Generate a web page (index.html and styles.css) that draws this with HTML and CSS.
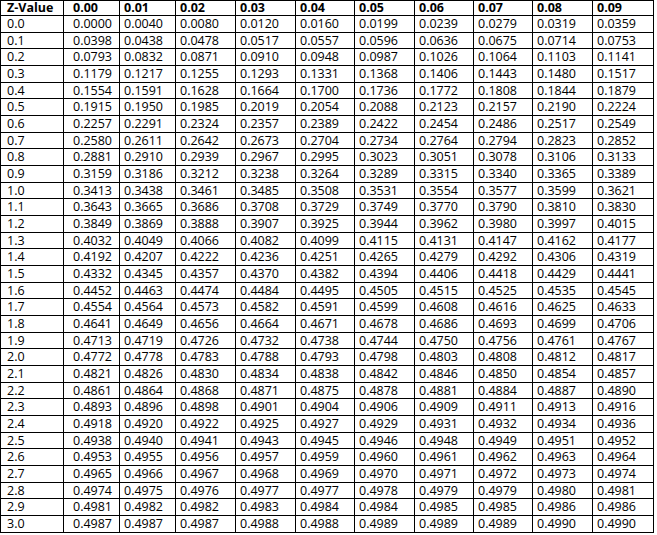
FILE: index.html
```html
<!DOCTYPE html>
<html>
<head>
<meta charset="utf-8">
<link rel="stylesheet" href="styles.css">
</head>
<body>
<table class="ztable">
<colgroup>
<col class="c0"><col class="c1"><col class="c2"><col class="c3"><col class="c4"><col class="c5"><col class="c6"><col class="c7"><col class="c8"><col class="c9"><col class="c10">
</colgroup>
<thead>
<tr><th>Z-Value</th><th>0.00</th><th>0.01</th><th>0.02</th><th>0.03</th><th>0.04</th><th>0.05</th><th>0.06</th><th>0.07</th><th>0.08</th><th>0.09</th></tr>
</thead>
<tbody>
<tr><td>0.0</td><td>0.0000</td><td>0.0040</td><td>0.0080</td><td>0.0120</td><td>0.0160</td><td>0.0199</td><td>0.0239</td><td>0.0279</td><td>0.0319</td><td>0.0359</td></tr>
<tr><td>0.1</td><td>0.0398</td><td>0.0438</td><td>0.0478</td><td>0.0517</td><td>0.0557</td><td>0.0596</td><td>0.0636</td><td>0.0675</td><td>0.0714</td><td>0.0753</td></tr>
<tr><td>0.2</td><td>0.0793</td><td>0.0832</td><td>0.0871</td><td>0.0910</td><td>0.0948</td><td>0.0987</td><td>0.1026</td><td>0.1064</td><td>0.1103</td><td>0.1141</td></tr>
<tr><td>0.3</td><td>0.1179</td><td>0.1217</td><td>0.1255</td><td>0.1293</td><td>0.1331</td><td>0.1368</td><td>0.1406</td><td>0.1443</td><td>0.1480</td><td>0.1517</td></tr>
<tr><td>0.4</td><td>0.1554</td><td>0.1591</td><td>0.1628</td><td>0.1664</td><td>0.1700</td><td>0.1736</td><td>0.1772</td><td>0.1808</td><td>0.1844</td><td>0.1879</td></tr>
<tr><td>0.5</td><td>0.1915</td><td>0.1950</td><td>0.1985</td><td>0.2019</td><td>0.2054</td><td>0.2088</td><td>0.2123</td><td>0.2157</td><td>0.2190</td><td>0.2224</td></tr>
<tr><td>0.6</td><td>0.2257</td><td>0.2291</td><td>0.2324</td><td>0.2357</td><td>0.2389</td><td>0.2422</td><td>0.2454</td><td>0.2486</td><td>0.2517</td><td>0.2549</td></tr>
<tr><td>0.7</td><td>0.2580</td><td>0.2611</td><td>0.2642</td><td>0.2673</td><td>0.2704</td><td>0.2734</td><td>0.2764</td><td>0.2794</td><td>0.2823</td><td>0.2852</td></tr>
<tr><td>0.8</td><td>0.2881</td><td>0.2910</td><td>0.2939</td><td>0.2967</td><td>0.2995</td><td>0.3023</td><td>0.3051</td><td>0.3078</td><td>0.3106</td><td>0.3133</td></tr>
<tr><td>0.9</td><td>0.3159</td><td>0.3186</td><td>0.3212</td><td>0.3238</td><td>0.3264</td><td>0.3289</td><td>0.3315</td><td>0.3340</td><td>0.3365</td><td>0.3389</td></tr>
<tr><td>1.0</td><td>0.3413</td><td>0.3438</td><td>0.3461</td><td>0.3485</td><td>0.3508</td><td>0.3531</td><td>0.3554</td><td>0.3577</td><td>0.3599</td><td>0.3621</td></tr>
<tr><td>1.1</td><td>0.3643</td><td>0.3665</td><td>0.3686</td><td>0.3708</td><td>0.3729</td><td>0.3749</td><td>0.3770</td><td>0.3790</td><td>0.3810</td><td>0.3830</td></tr>
<tr><td>1.2</td><td>0.3849</td><td>0.3869</td><td>0.3888</td><td>0.3907</td><td>0.3925</td><td>0.3944</td><td>0.3962</td><td>0.3980</td><td>0.3997</td><td>0.4015</td></tr>
<tr><td>1.3</td><td>0.4032</td><td>0.4049</td><td>0.4066</td><td>0.4082</td><td>0.4099</td><td>0.4115</td><td>0.4131</td><td>0.4147</td><td>0.4162</td><td>0.4177</td></tr>
<tr><td>1.4</td><td>0.4192</td><td>0.4207</td><td>0.4222</td><td>0.4236</td><td>0.4251</td><td>0.4265</td><td>0.4279</td><td>0.4292</td><td>0.4306</td><td>0.4319</td></tr>
<tr><td>1.5</td><td>0.4332</td><td>0.4345</td><td>0.4357</td><td>0.4370</td><td>0.4382</td><td>0.4394</td><td>0.4406</td><td>0.4418</td><td>0.4429</td><td>0.4441</td></tr>
<tr><td>1.6</td><td>0.4452</td><td>0.4463</td><td>0.4474</td><td>0.4484</td><td>0.4495</td><td>0.4505</td><td>0.4515</td><td>0.4525</td><td>0.4535</td><td>0.4545</td></tr>
<tr><td>1.7</td><td>0.4554</td><td>0.4564</td><td>0.4573</td><td>0.4582</td><td>0.4591</td><td>0.4599</td><td>0.4608</td><td>0.4616</td><td>0.4625</td><td>0.4633</td></tr>
<tr><td>1.8</td><td>0.4641</td><td>0.4649</td><td>0.4656</td><td>0.4664</td><td>0.4671</td><td>0.4678</td><td>0.4686</td><td>0.4693</td><td>0.4699</td><td>0.4706</td></tr>
<tr><td>1.9</td><td>0.4713</td><td>0.4719</td><td>0.4726</td><td>0.4732</td><td>0.4738</td><td>0.4744</td><td>0.4750</td><td>0.4756</td><td>0.4761</td><td>0.4767</td></tr>
<tr><td>2.0</td><td>0.4772</td><td>0.4778</td><td>0.4783</td><td>0.4788</td><td>0.4793</td><td>0.4798</td><td>0.4803</td><td>0.4808</td><td>0.4812</td><td>0.4817</td></tr>
<tr><td>2.1</td><td>0.4821</td><td>0.4826</td><td>0.4830</td><td>0.4834</td><td>0.4838</td><td>0.4842</td><td>0.4846</td><td>0.4850</td><td>0.4854</td><td>0.4857</td></tr>
<tr><td>2.2</td><td>0.4861</td><td>0.4864</td><td>0.4868</td><td>0.4871</td><td>0.4875</td><td>0.4878</td><td>0.4881</td><td>0.4884</td><td>0.4887</td><td>0.4890</td></tr>
<tr><td>2.3</td><td>0.4893</td><td>0.4896</td><td>0.4898</td><td>0.4901</td><td>0.4904</td><td>0.4906</td><td>0.4909</td><td>0.4911</td><td>0.4913</td><td>0.4916</td></tr>
<tr><td>2.4</td><td>0.4918</td><td>0.4920</td><td>0.4922</td><td>0.4925</td><td>0.4927</td><td>0.4929</td><td>0.4931</td><td>0.4932</td><td>0.4934</td><td>0.4936</td></tr>
<tr><td>2.5</td><td>0.4938</td><td>0.4940</td><td>0.4941</td><td>0.4943</td><td>0.4945</td><td>0.4946</td><td>0.4948</td><td>0.4949</td><td>0.4951</td><td>0.4952</td></tr>
<tr><td>2.6</td><td>0.4953</td><td>0.4955</td><td>0.4956</td><td>0.4957</td><td>0.4959</td><td>0.4960</td><td>0.4961</td><td>0.4962</td><td>0.4963</td><td>0.4964</td></tr>
<tr><td>2.7</td><td>0.4965</td><td>0.4966</td><td>0.4967</td><td>0.4968</td><td>0.4969</td><td>0.4970</td><td>0.4971</td><td>0.4972</td><td>0.4973</td><td>0.4974</td></tr>
<tr><td>2.8</td><td>0.4974</td><td>0.4975</td><td>0.4976</td><td>0.4977</td><td>0.4977</td><td>0.4978</td><td>0.4979</td><td>0.4979</td><td>0.4980</td><td>0.4981</td></tr>
<tr><td>2.9</td><td>0.4981</td><td>0.4982</td><td>0.4982</td><td>0.4983</td><td>0.4984</td><td>0.4984</td><td>0.4985</td><td>0.4985</td><td>0.4986</td><td>0.4986</td></tr>
<tr><td>3.0</td><td>0.4987</td><td>0.4987</td><td>0.4987</td><td>0.4988</td><td>0.4988</td><td>0.4989</td><td>0.4989</td><td>0.4989</td><td>0.4990</td><td>0.4990</td></tr>
</tbody>
</table>
</body>
</html>
```

FILE: styles.css
```css
html, body {
  margin: 0;
  padding: 0;
  background: #ffffff;
}

.ztable {
  border-collapse: collapse;
  table-layout: fixed;
  width: 654px;
  height: 533px;
  font-family: "Open Sans", "Liberation Sans", sans-serif;
  font-size: 12.5px;
  color: #000;
}

.ztable th,
.ztable td {
  border: 1px solid #000;
  padding: 0 0 0 4px;
  text-align: left;
  vertical-align: middle;
  line-height: 14px;
  white-space: nowrap;
  overflow: hidden;
}

.ztable th {
  font-weight: 700;
}

.ztable td:first-child,
.ztable th:first-child {
  padding-left: 6px;
}

.ztable td:nth-child(2),
.ztable th:nth-child(2) {
  padding-left: 9px;
}

.c0 { width: 63px; }
.c1 { width: 56px; }
.c2 { width: 56px; }
.c3 { width: 60px; }
.c4 { width: 60px; }
.c5 { width: 59px; }
.c6 { width: 60px; }
.c7 { width: 59px; }
.c8 { width: 59px; }
.c9 { width: 60px; }
.c10 { width: 61px; }
```
